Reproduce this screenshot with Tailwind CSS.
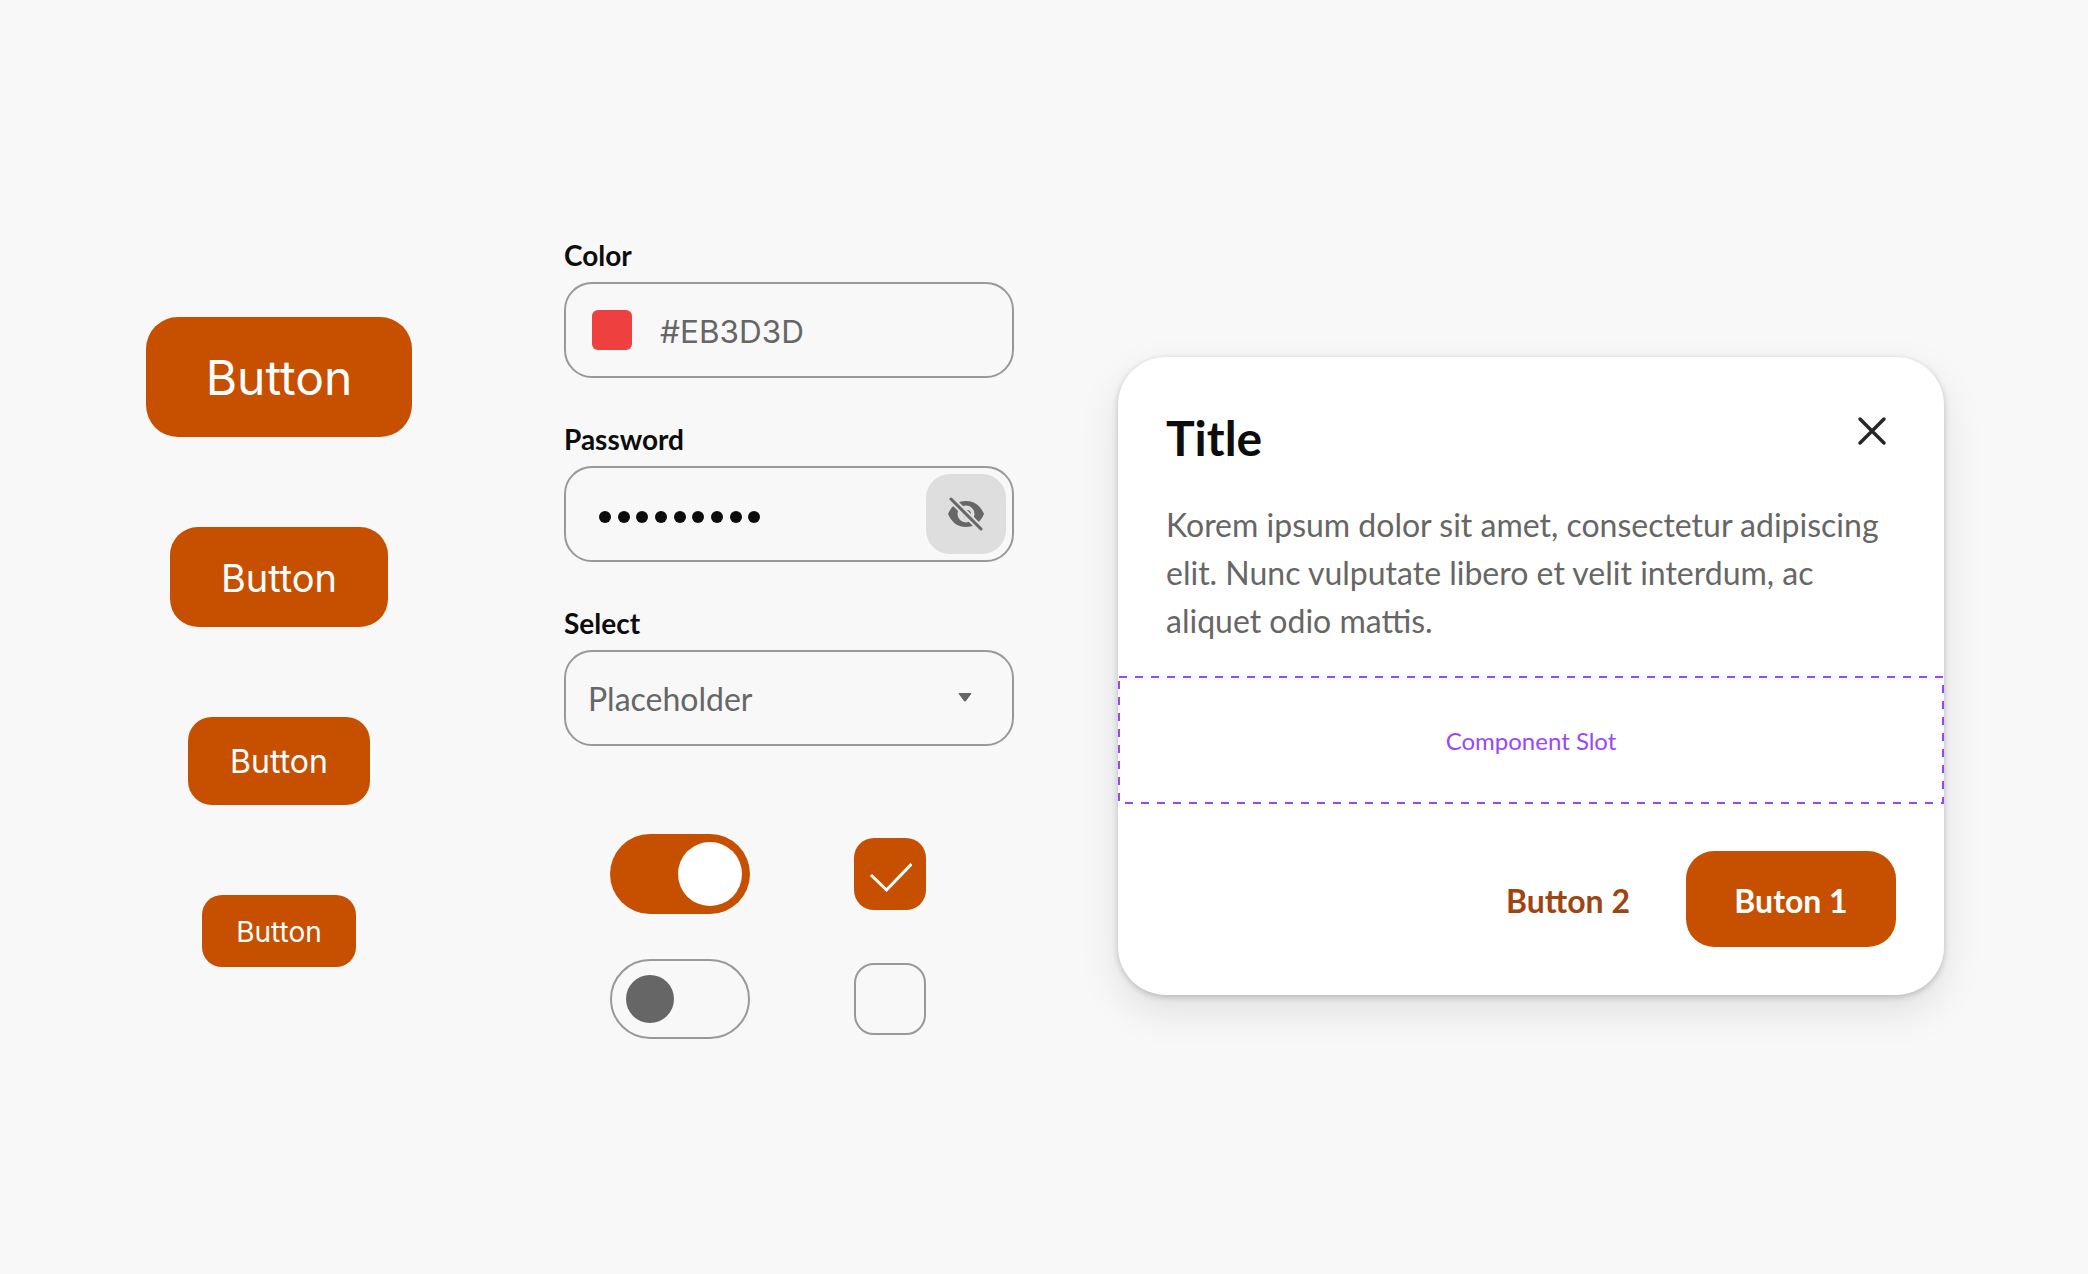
<!DOCTYPE html>
<html lang="en">
<head>
    <meta charset="UTF-8">
    <title>Components</title>
    <script src="https://cdn.jsdelivr.net/npm/@tailwindcss/browser@4"></script>
</head>
<body class="bg-[#f8f8f8] font-['Lato',sans-serif] w-[2088px] h-[1274px] overflow-hidden">
    <div class="flex items-start pl-[146px]">

        <!-- Buttons -->
        <div class="w-[266px] pt-[317px] flex flex-col items-center gap-[90px] font-['Inter',sans-serif] text-white">
            <button class="w-[266px] h-[120px] pt-[2px] rounded-[32px] bg-[#c75000] text-[48px]">Button</button>
            <button class="w-[218px] h-[100px] pt-[2px] rounded-[28px] bg-[#c75000] text-[38px]">Button</button>
            <button class="w-[182px] h-[88px] pt-[2px] rounded-[24px] bg-[#c75000] text-[32px]">Button</button>
            <button class="w-[154px] h-[72px] pt-[1px] rounded-[20px] bg-[#c75000] text-[28px]">Button</button>
        </div>

        <!-- Inputs -->
        <div class="w-[450px] ml-[152px] pt-[237px]">
            <label class="block text-[28px] leading-[36px] font-bold text-[#0d0d0d] mb-[9px]">Color</label>
            <div class="h-[96px] rounded-[28px] border-2 border-[#999999] flex items-center pl-[26px]">
                <span class="w-[40px] h-[40px] rounded-[6px] bg-[#ef4040]"></span>
                <span class="ml-[28px] pt-[3px] text-[31.5px] text-[#666666] font-['Inter',sans-serif]">#EB3D3D</span>
            </div>

            <label class="block text-[28px] leading-[36px] font-bold text-[#0d0d0d] mt-[43px] mb-[9px]">Password</label>
            <div class="h-[96px] rounded-[28px] border-2 border-[#999999] flex items-center justify-between pl-[33px] pr-[6px]">
                <div class="flex gap-[6.67px] mt-[6px]">
                    <span class="w-[12px] h-[12px] rounded-full bg-[#0d0d0d]"></span>
                    <span class="w-[12px] h-[12px] rounded-full bg-[#0d0d0d]"></span>
                    <span class="w-[12px] h-[12px] rounded-full bg-[#0d0d0d]"></span>
                    <span class="w-[12px] h-[12px] rounded-full bg-[#0d0d0d]"></span>
                    <span class="w-[12px] h-[12px] rounded-full bg-[#0d0d0d]"></span>
                    <span class="w-[12px] h-[12px] rounded-full bg-[#0d0d0d]"></span>
                    <span class="w-[12px] h-[12px] rounded-full bg-[#0d0d0d]"></span>
                    <span class="w-[12px] h-[12px] rounded-full bg-[#0d0d0d]"></span>
                    <span class="w-[12px] h-[12px] rounded-full bg-[#0d0d0d]"></span>
                </div>
                <div class="w-[80px] h-[80px] rounded-[24px] bg-[#dedede] flex items-center justify-center">
                    <svg width="40" height="40" viewBox="0 0 40 40">
                        <path d="M2 20C6 11 12 7 20 7C28 7 34 11 38 20C34 29 28 33 20 33C12 33 6 29 2 20Z" fill="#666666"/>
                        <circle cx="20" cy="20" r="8.5" fill="#dedede"/>
                        <circle cx="21" cy="20" r="4" fill="#666666"/>
                        <path d="M5 5L35 35" stroke="#dedede" stroke-width="7"/>
                        <path d="M5 5L35 35" stroke="#666666" stroke-width="3" stroke-linecap="round"/>
                    </svg>
                </div>
            </div>

            <label class="block text-[28px] leading-[36px] font-bold text-[#0d0d0d] mt-[43px] mb-[9px]">Select</label>
            <div class="h-[96px] rounded-[28px] border-2 border-[#999999] flex items-center justify-between pl-[22px] pr-[40px]">
                <span class="pt-[1px] text-[32px] text-[#666666]">Placeholder</span>
                <svg class="mb-[2px]" width="14" height="10" viewBox="0 0 14 10"><path d="M1 1.5H13L7.5 9Q7 9.5 6.5 9Z" fill="#666666" stroke="#666666" stroke-linejoin="round"/></svg>
            </div>

            <div class="mt-[88px] pl-[46px] grid grid-cols-[140px_72px] gap-x-[104px] gap-y-[45px] items-center">
                <div class="w-[140px] h-[80px] rounded-full bg-[#c75000] flex items-center justify-end pr-[8px]">
                    <span class="w-[64px] h-[64px] rounded-full bg-white"></span>
                </div>
                <div class="w-[72px] h-[72px] rounded-[20px] bg-[#c75000] flex items-center justify-center">
                    <svg width="44" height="40" viewBox="0 0 44 40"><path d="M3 21L18.5 36L43.5 10" fill="none" stroke="white" stroke-width="3"/></svg>
                </div>
                <div class="w-[140px] h-[80px] rounded-full border-2 border-[#999999] flex items-center pl-[14px]">
                    <span class="w-[48px] h-[48px] rounded-full bg-[#666666]"></span>
                </div>
                <div class="w-[72px] h-[72px] rounded-[20px] border-2 border-[#999999]"></div>
            </div>
        </div>

        <!-- Dialog -->
        <div class="w-[826px] h-[638px] ml-[104px] mt-[357px] bg-white rounded-[48px] shadow-[0_2px_6px_rgba(0,0,0,0.2),0_16px_40px_rgba(0,0,0,0.1)] flex flex-col">
            <div class="flex items-start justify-between pt-[52px] pl-[48px] pr-[56px]">
                <h1 class="text-[48px] leading-[58px] font-bold text-[#0d0d0d]">Title</h1>
                <svg class="mt-[6px]" width="32" height="32" viewBox="0 0 32 32"><path d="M4 4L28 28M28 4L4 28" stroke="#262626" stroke-width="3.5" stroke-linecap="round"/></svg>
            </div>
            <p class="mt-[34px] px-[48px] text-[32px] leading-[48px] text-[#666666]">Korem ipsum dolor sit amet, consectetur adipiscing elit. Nunc vulputate libero et velit interdum, ac aliquet odio mattis.</p>
            <div class="relative mt-[31px] h-[128px] pt-[1px] flex items-center justify-center text-[24px] text-[#9747ff]">
                <svg class="absolute inset-0" width="826" height="128"><rect x="1" y="1" width="824" height="126" fill="none" stroke="#9747ff" stroke-width="2" stroke-dasharray="8 8"/></svg>
                Component Slot
            </div>
            <div class="mt-[47px] pr-[48px] flex items-center justify-end gap-[56px] text-[32px] font-bold">
                <button class="pt-[3px] text-[#a04410]">Button 2</button>
                <button class="w-[210px] h-[96px] pt-[3px] rounded-[28px] bg-[#c75000] text-white">Buton 1</button>
            </div>
        </div>
    </div>
</body>
</html>
